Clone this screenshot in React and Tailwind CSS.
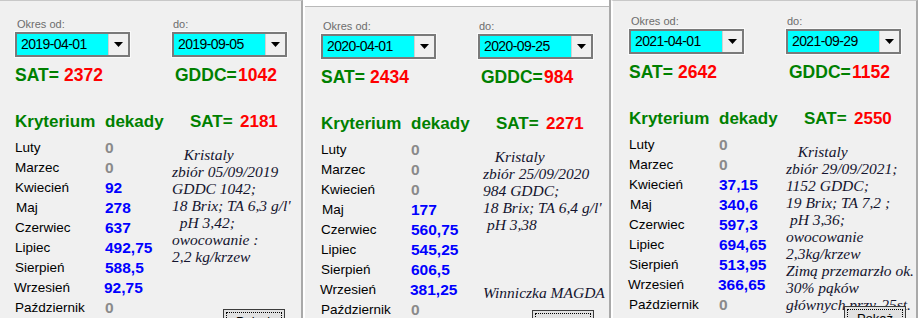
import React from "react";

const sans = "font-['Liberation_Sans',Arial,sans-serif]";
const serif = "font-['Liberation_Serif','Times_New_Roman',serif]";

const panels = [
  {
    outer: "w-[303px] border-r-2 border-r-[#a9a9a9] border-t border-t-[#c8c8c8]",
    inner: "pt-[17px] pl-[15px]",
    from: "2019-04-01",
    to: "2019-09-05",
    sat: "2372",
    gddc: "1042",
    dekSat: "2181",
    values: ["0", "0", "92", "278", "637", "492,75", "588,5", "92,75", "0"],
    notesPad: "ml-[0px]",
    notes: "   Kristaly\nzbiór 05/09/2019\nGDDC 1042;\n18 Brix; TA 6,3 g/l'\n  pH 3,42;\nowocowanie :\n2,2 kg/krzew",
    btn: "top-[308px] left-[223px]",
  },
  {
    outer: "w-[308px] border-l-2 border-l-white border-r-2 border-r-[#a9a9a9]",
    top: true,
    inner: "pt-[13px] pl-[16px]",
    from: "2020-04-01",
    to: "2020-09-25",
    sat: "2434",
    gddc: "984",
    dekSat: "2271",
    values: ["0", "0", "0", "177", "560,75", "545,25", "606,5", "381,25", "0"],
    notesPad: "ml-[5px]",
    notes: "   Kristaly\nzbiór 25/09/2020\n984 GDDC;\n18 Brix; TA 6,4 g/l'\n pH 3,38\n\n\n\nWinniczka MAGDA",
    btn: "top-[310px] left-[227px]",
  },
  {
    outer: "w-[307px] border-l-2 border-l-white border-r-2 border-r-[#a9a9a9] border-t border-t-[#c8c8c8]",
    inner: "pt-[14px] pl-[16px]",
    from: "2021-04-01",
    to: "2021-09-29",
    sat: "2642",
    gddc: "1152",
    dekSat: "2550",
    values: ["0", "0", "37,15", "340,6", "597,3", "694,65", "513,95", "366,65", "0"],
    notesPad: "ml-[0px]",
    notes: "   Kristaly\nzbiór 29/09/2021;\n1152 GDDC;\n19 Brix; TA 7,2 ;\n pH 3,36;\nowocowanie\n2,3kg/krzew\nZimą przemarzło ok.\n30% pąków\ngłównych przy-25st.",
    btn: "top-[305px] left-[231px]",
  },
];

const months = [
  ["Luty", ""],
  ["Marzec", ""],
  ["Kwiecień", ""],
  ["Maj", "pl-[1px]"],
  ["Czerwiec", ""],
  ["Lipiec", ""],
  ["Sierpień", ""],
  ["Wrzesień", "-ml-[1px]"],
  ["Październik", ""],
];

function Combo({ value }) {
  return (
    <div className="flex h-[25px] w-[115px] border-2 border-[#7a7a7a] bg-white shadow-[0_0_0_1px_#fafafa]">
      <div className="flex flex-1 items-center bg-[#00ffff] pl-[4px] text-[14px] tracking-[-0.6px] text-black">
        {value}
      </div>
      <div className="flex w-[20px] items-center justify-center border-l border-[#d0d0d0] bg-[#f0f0f0]">
        <svg width="9" height="5" viewBox="0 0 9 5">
          <path d="M0 0h9L4.5 5z" fill="#000" />
        </svg>
      </div>
    </div>
  );
}

function Panel({ p }) {
  return (
    <div className={`relative h-[318px] shrink-0 overflow-hidden bg-[#f0f0f0] ${p.outer}`}>
      {p.top && <div className="h-[7px] border-b border-[#b9b9b9] bg-white" />}
      <div className={p.inner}>
        <div className="flex">
          <div className="w-[157px]">
            <div className="h-[13px] pl-[2px] text-[11px] leading-[13px] text-[#6d6d6d]">Okres od:</div>
            <div className="mt-[1px]">
              <Combo value={p.from} />
            </div>
          </div>
          <div>
            <div className="h-[13px] pl-[1px] text-[11px] leading-[13px] text-[#6d6d6d]">do:</div>
            <div className="mt-[1px]">
              <Combo value={p.to} />
            </div>
          </div>
        </div>

        <div className="mt-[8px] flex h-[20px] text-[17.5px] font-bold leading-[20px]">
          <div className="flex w-[160px]">
            <span className="w-[49px] text-[#008000]">SAT=</span>
            <span className="text-[#ff0000]">{p.sat}</span>
          </div>
          <span className="w-[63px] text-[#008000]">GDDC=</span>
          <span className="text-[#ff0000]">{p.gddc}</span>
        </div>

        <div className="mt-[27px] flex h-[20px] text-[17px] font-bold leading-[20px]">
          <span className="w-[90px] text-[#008000]">Kryterium</span>
          <span className="w-[85px] text-[#008000]">dekady</span>
          <span className="w-[50px] text-[#008000]">SAT=</span>
          <span className="text-[#ff0000]">{p.dekSat}</span>
        </div>

        <div className="mt-[6px] flex">
          <div className="w-[157px] shrink-0">
            {months.map(([m, cls], i) => {
              const v = p.values[i];
              return (
                <div key={m} className="flex h-[20px] items-center leading-[20px]">
                  <span className={`w-[90px] text-[13.5px] text-black ${cls}`}>{m}</span>
                  <span
                    className={`text-[15.5px] font-bold ${v === "0" ? "text-[#8a8a8a]" : "text-[#0000ff]"}`}
                  >
                    {v}
                  </span>
                </div>
              );
            })}
          </div>
          <div
            className={`${serif} ${p.notesPad} mt-[8px] whitespace-pre text-[15.5px] italic leading-[17px] text-[#14142e]`}
          >
            {p.notes}
          </div>
        </div>
      </div>

      <div className={`absolute ${p.btn} h-[24px] w-[62px] border border-[#3c3c3c] bg-[#e1e1e1] p-[2px]`}>
        <div className="flex h-full items-start justify-center border border-dotted border-black pt-[2px] text-[13px] leading-[14px] text-black">
          Pokaż
        </div>
      </div>
    </div>
  );
}

export default function App() {
  return (
    <div className={`${sans} flex h-[318px] w-[921px] overflow-hidden bg-white`}>
      {panels.map((p, i) => (
        <Panel key={i} p={p} />
      ))}
    </div>
  );
}
